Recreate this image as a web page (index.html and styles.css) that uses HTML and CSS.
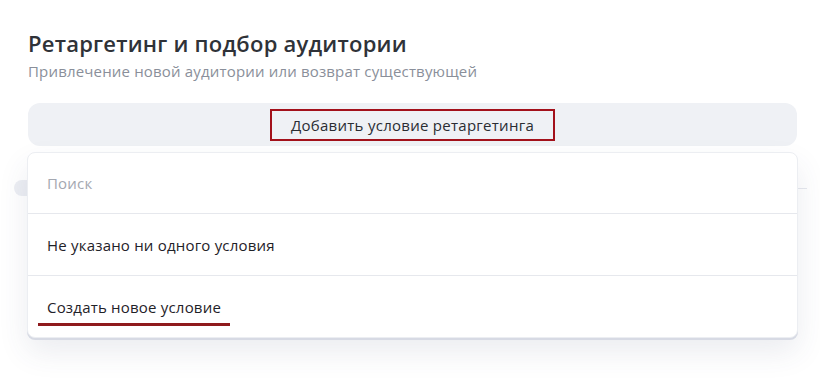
FILE: index.html
```html
<!DOCTYPE html>
<html lang="ru">
<head>
<meta charset="utf-8">
<link rel="stylesheet" href="styles.css">
</head>
<body>
<div class="page">
  <h1 class="title">Ретаргетинг и подбор аудитории</h1>
  <p class="subtitle">Привлечение новой аудитории или возврат существующей</p>
  <div class="addbar">
    <button class="addbtn">Добавить условие ретаргетинга</button>
  </div>
  <div class="under">
    <div class="under-row">
      <span class="pill"></span>
      <span class="line"></span>
    </div>
    <div class="menu">
      <div class="menu-search">Поиск</div>
      <div class="menu-item">Не указано ни одного условия</div>
      <div class="menu-item create"><span class="create-text">Создать новое условие</span></div>
    </div>
  </div>
</div>
</body>
</html>
```
FILE: styles.css
```css
* { box-sizing: border-box; }
html, body { margin: 0; padding: 0; background: #fff; }
body { font-family: "Open Sans", "Liberation Sans", Arial, sans-serif; color: #21242b; }
.page { padding: 28px 23px 0 28px; }
.title { margin: 0; font-size: 22px; font-weight: 600; line-height: 30px; color: #2f3238; letter-spacing: 0.23px; }
.subtitle { margin: 3px 0 0; font-size: 15px; line-height: 20px; color: #8a8f9a; letter-spacing: 0.17px; }
.addbar { margin-top: 22px; height: 43px; background: #eff1f5; border-radius: 12px; display: flex; justify-content: center; align-items: center; }
.addbtn { font-family: inherit; font-size: 15px; color: #2a2d33; background: transparent; border: 2px solid #a3111b; height: 32px; padding: 0 19px; letter-spacing: 0.27px; }
.under { position: relative; height: 240px; }
.under-row { display: flex; align-items: center; padding-top: 34px; margin-left: -14px; }
.pill { width: 28px; height: 16px; border-radius: 8px; background: #eceef3; }
.line { flex: 1; height: 1px; background: #e6e8ee; margin-left: 10px; margin-right: -10px; }
.menu { position: absolute; left: -1px; right: -1px; top: 6px; background: #fff; border-radius: 8px; border: 1px solid #eceef2; box-shadow: 0 2px 0 0 #d7dae4, 0 14px 30px rgba(60, 70, 110, 0.10); overflow: hidden; }
.menu-search { height: 61px; padding: 0 19px; display: flex; align-items: center; font-size: 15px; color: #a4a8b1; border-bottom: 1px solid #e6e8ed; letter-spacing: 0.2px; }
.menu-item { height: 62px; padding: 0 19px; display: flex; align-items: center; font-size: 15px; color: #1f2228; border-bottom: 1px solid #e6e8ed; letter-spacing: 0.2px; }
.menu-item.create { border-bottom: none; height: 61px; }
.create-text { padding: 0 9px 6px; margin-left: -9px; border-bottom: 3px solid #8f1a1d; margin-top: 10px; }
```
